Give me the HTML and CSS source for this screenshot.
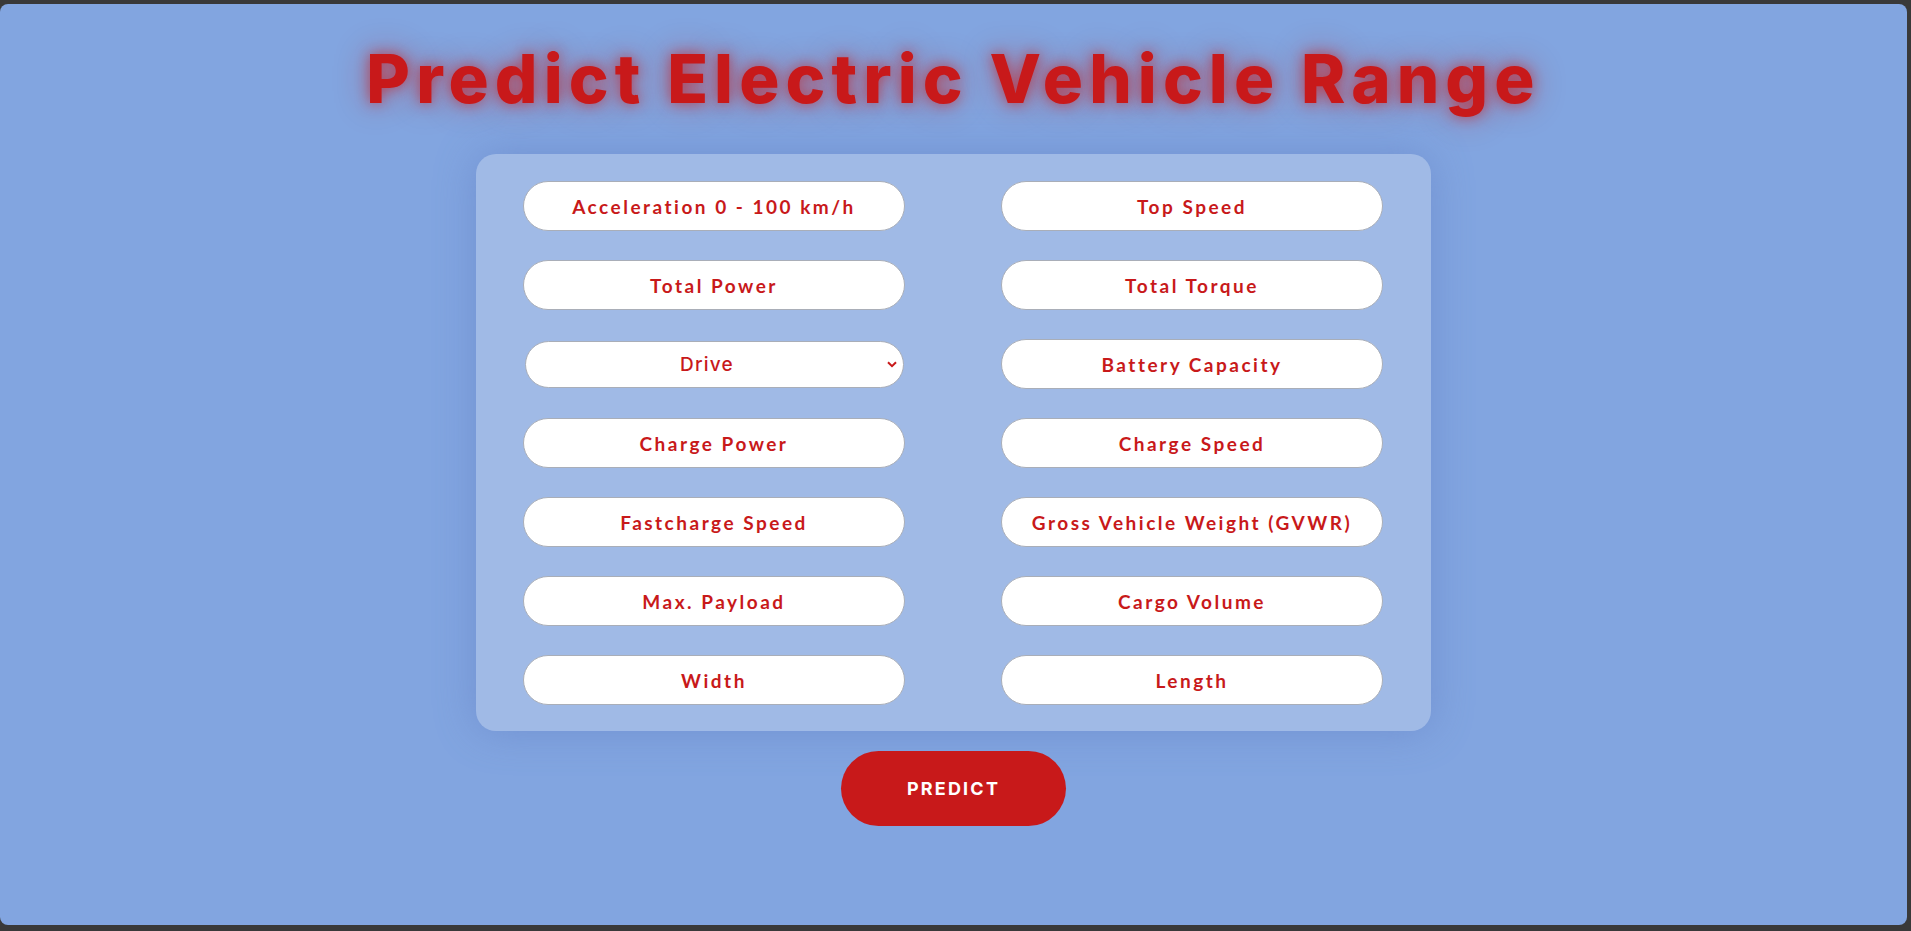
FILE: index.html
```html
<!DOCTYPE html>
<html lang="en">
<head>
<meta charset="utf-8">
<title>Predict Electric Vehicle Range</title>
<link rel="stylesheet" href="styles.css">
</head>
<body>
<div class="window">
  <h1 class="title">Predict Electric Vehicle Range</h1>
  <form class="form">
    <div class="card">
      <input class="field" type="text" placeholder="Acceleration 0 - 100 km/h">
      <input class="field" type="text" placeholder="Top Speed">
      <input class="field" type="text" placeholder="Total Power">
      <input class="field" type="text" placeholder="Total Torque">
      <div class="select-wrap">
        <select class="select">
          <option>Drive</option>
        </select>
        <svg class="chevron" width="10" height="7" viewBox="0 0 10 7"><path d="M1 1.2 L5 5.2 L9 1.2" fill="none" stroke="#c8191a" stroke-width="2"/></svg>
      </div>
      <input class="field" type="text" placeholder="Battery Capacity">
      <input class="field" type="text" placeholder="Charge Power">
      <input class="field" type="text" placeholder="Charge Speed">
      <input class="field" type="text" placeholder="Fastcharge Speed">
      <input class="field" type="text" placeholder="Gross Vehicle Weight (GVWR)">
      <input class="field" type="text" placeholder="Max. Payload">
      <input class="field" type="text" placeholder="Cargo Volume">
      <input class="field" type="text" placeholder="Width">
      <input class="field" type="text" placeholder="Length">
    </div>
    <button class="predict" type="button">PREDICT</button>
  </form>
</div>
</body>
</html>
```

FILE: styles.css
```css
html, body {
  margin: 0;
  padding: 0;
  height: 100%;
}
body {
  background: #393939;
  padding: 4px 4px 6px 0;
  box-sizing: border-box;
}
.window {
  height: 100%;
  background: #82a5e0;
  border-radius: 8px;
  display: flex;
  flex-direction: column;
  align-items: center;
}
.title {
  margin: 31px 0 0 0;
  font-family: Inter, "Open Sans", sans-serif;
  font-weight: 800;
  font-size: 67px;
  line-height: 88px;
  letter-spacing: 6.1px;
  color: #c8191a;
  text-shadow: 0 0 14px rgba(200, 25, 26, 0.65), 0 0 34px rgba(200, 25, 26, 0.45);
}
.form {
  margin-top: 31px;
  display: flex;
  flex-direction: column;
  align-items: center;
}
.card {
  width: 955px;
  box-sizing: border-box;
  padding: 27px 48px 26px 47px;
  background: #a0bae6;
  border-radius: 20px;
  box-shadow: 0 0 40px rgba(90, 120, 190, 0.45);
  display: grid;
  grid-template-columns: 382px 382px;
  column-gap: 96px;
  row-gap: 29px;
}
.field {
  width: 382px;
  height: 50px;
  box-sizing: border-box;
  border: 1px solid #a9aeb8;
  border-radius: 25px;
  background: #fff;
  text-align: center;
  font-family: Lato, sans-serif;
  font-weight: 700;
  font-size: 19px;
  letter-spacing: 2.5px;
  color: #c8191a;
  outline: none;
  padding: 0 6px;
}
.field::placeholder {
  color: #c8191a;
  opacity: 1;
}
.select-wrap {
  position: relative;
  height: 50px;
  display: flex;
  align-items: center;
  justify-content: center;
}
.select {
  width: 379px;
  height: 47px;
  box-sizing: border-box;
  border: 1px solid #a9aeb8;
  border-radius: 24px;
  background: #fff;
  appearance: none;
  -webkit-appearance: none;
  text-align: center;
  text-align-last: center;
  font-family: Inter, sans-serif;
  font-weight: 500;
  font-size: 19px;
  letter-spacing: 1.2px;
  color: #c8191a;
  padding: 0 28px 0 14px;
  outline: none;
}
.chevron {
  position: absolute;
  right: 8px;
  top: 22px;
  pointer-events: none;
}
.predict {
  margin-top: 20px;
  width: 225px;
  height: 75px;
  border: none;
  border-radius: 38px;
  background: #c8191a;
  color: #fff;
  font-family: Inter, sans-serif;
  font-weight: 700;
  font-size: 18px;
  letter-spacing: 2.2px;
  cursor: pointer;
}
```
